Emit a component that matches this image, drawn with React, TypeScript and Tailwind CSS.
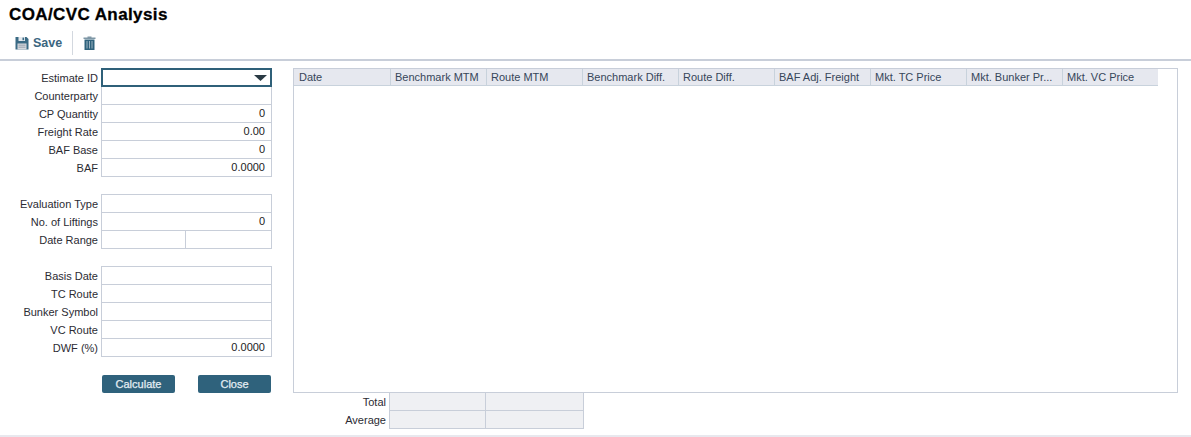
import React from "react";

const font = { fontFamily: '"Liberation Sans", Arial, sans-serif' };

function Row({ label, value, split, top }: { label: string; value?: string; split?: boolean; top?: boolean }) {
  return (
    <div className="flex h-[18px] items-stretch">
      <div className="w-[99px] shrink-0 pr-[1px] text-right text-[11px] leading-[18px] text-[#2b2b33]">{label}</div>
      <div className={`ml-[2px] flex w-[171px] border-x-[1px] border-b-[1px] border-[#c8ced9] ${top ? "border-t-[1px] h-[19px] -mt-[1px]" : "h-[18px]"}`}>
        {split ? (
          <>
            <div className="w-[84px] border-r-[1px] border-[#c8ced9]" />
            <div className="flex-1" />
          </>
        ) : (
          <div className="flex-1 pr-[6px] text-right text-[11px] leading-[17px] text-[#222]">{value}</div>
        )}
      </div>
    </div>
  );
}

const cols = ["Date", "Benchmark MTM", "Route MTM", "Benchmark Diff.", "Route Diff.", "BAF Adj. Freight", "Mkt. TC Price", "Mkt. Bunker Pr...", "Mkt. VC Price"];

export default function App() {
  return (
    <div className="h-[437px] w-[1191px] overflow-hidden bg-white" style={font}>
      <div className="h-[61px] border-b-[2px] border-[#c8ced9]">
        <div className="pl-[9px] pt-[5px] text-[17px] font-bold leading-[20px] tracking-[0.4px] text-black [-webkit-text-stroke:0.3px_black]">COA/CVC Analysis</div>
        <div className="mt-[6px] flex h-[24px] items-center pl-[15px]">
          <svg width="14" height="14" viewBox="0 0 14 14" className="shrink-0">
            <path d="M0.5 1h11l2 2v10.5h-13z" fill="#3a6a84" />
            <rect x="3.5" y="1" width="6.5" height="4" fill="#e4e9ee" />
            <rect x="7.5" y="1.6" width="1.6" height="2.6" fill="#3a6a84" />
            <rect x="2.5" y="7.5" width="9" height="6" fill="#d5d8dd" />
            <path d="M3.5 9.2h7M3.5 11.2h7" stroke="#8c98a4" strokeWidth="0.8" />
          </svg>
          <span className="ml-[4px] text-[12.5px] font-bold leading-[20px] text-[#3b6680]">Save</span>
          <div className="ml-[10px] h-[24px] w-[1px] bg-[#d3d8df]" />
          <svg width="13" height="14" viewBox="0 0 13 14" className="ml-[10px] shrink-0">
            <path d="M4.5 1.5V.6h4v.9H12.5V3H.5V1.5z" fill="#7f97a6" />
            <path d="M1.5 3.5h10V14h-10z" fill="#2f627c" />
            <path d="M4 5v7.5M6.5 5v7.5M9 5v7.5" stroke="#9db4c2" strokeWidth="1" />
          </svg>
        </div>
      </div>

      <div className="flex h-[374px]">
        <div className="w-[293px] shrink-0 pt-[7px]">
          <div className="flex h-[18px] items-stretch">
            <div className="w-[99px] shrink-0 pr-[1px] text-right text-[11px] leading-[20px] text-[#2b2b33]">Estimate ID</div>
            <div className="ml-[2px] flex h-[19px] w-[171px] items-center justify-end border-[2px] border-[#2f6079] pr-[3px]">
              <svg width="13" height="6" viewBox="0 0 13 6"><path d="M0 0h13L6.5 6z" fill="#2a3a44" /></svg>
            </div>
          </div>
          <div className="h-[1px]" />
          <Row label="Counterparty" />
          <Row label="CP Quantity" value="0" />
          <Row label="Freight Rate" value="0.00" />
          <Row label="BAF Base" value="0" />
          <Row label="BAF" value="0.0000" />

          <div className="h-[18px]" />
          <Row label="Evaluation Type" top />
          <Row label="No. of Liftings" value="0" />
          <Row label="Date Range" split />

          <div className="h-[18px]" />
          <Row label="Basis Date" top />
          <Row label="TC Route" />
          <Row label="Bunker Symbol" />
          <Row label="VC Route" />
          <Row label="DWF (%)" value="0.0000" />

          <div className="mt-[18px] flex pl-[102px]">
            <button className="h-[18px] w-[73px] rounded-[2px] bg-[#2f627c] text-[11px] leading-[18px] text-[#e4edf3] [-webkit-text-stroke:0.25px_#e4edf3]">Calculate</button>
            <button className="ml-[23px] h-[18px] w-[73px] rounded-[2px] bg-[#2f627c] text-[11px] leading-[18px] text-[#e4edf3] [-webkit-text-stroke:0.25px_#e4edf3]">Close</button>
          </div>
        </div>

        <div className="flex w-[885px] shrink-0 flex-col pt-[7px]">
          <div className="h-[325px] border-[1px] border-[#c8ced9]">
            <div className="flex h-[17px]">
              {cols.map((c) => (
                <div key={c} className="w-[96px] shrink-0 truncate border-r-[1px] border-b-[1px] border-[#c8d2dc] bg-[#e6e8ef] pl-[4px] text-[11px] leading-[16px] text-[#36465a] first:w-[97px] first:pl-[5px] last:w-[95px] last:border-r-0">
                  {c}
                </div>
              ))}
            </div>
          </div>
          <div className="flex">
            <div className="w-[96px] shrink-0 pr-[3px] text-right text-[11px] leading-[18px] text-[#2b2b33]">
              <div className="h-[18px]">Total</div>
              <div className="h-[18px]">Average</div>
            </div>
            <div className="grid w-[195px] grid-cols-[96px_97px] border-x-[1px] border-b-[1px] border-[#c8ced9] bg-[#eff0f3]">
              <div className="h-[18px] border-r-[1px] border-b-[1px] border-[#c8ced9]" />
              <div className="h-[18px] border-b-[1px] border-[#c8ced9]" />
              <div className="h-[17px] border-r-[1px] border-[#c8ced9]" />
              <div className="h-[17px]" />
            </div>
          </div>
        </div>
      </div>
      <div className="h-[2px] bg-[#e8e8ee]" />
    </div>
  );
}
